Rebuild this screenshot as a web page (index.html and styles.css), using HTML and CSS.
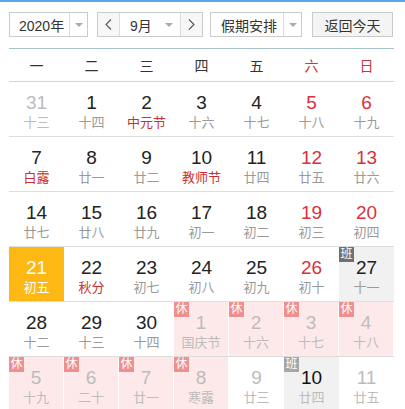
FILE: index.html
```html
<!DOCTYPE html>
<html lang="zh-CN">
<head>
  <meta charset="UTF-8">
  <title>万年历</title>
  <link rel="stylesheet" href="styles.css">
</head>
<body>
  <div class="calendar">
    <div class="toolbar">
      <div class="picker year-picker">
        <span class="picker-text">2020年</span>
        <span class="picker-drop"><i class="caret"></i></span>
      </div>
      <div class="picker month-picker">
        <span class="nav-btn">
          <svg width="7" height="11" viewBox="0 0 7 11"><polyline points="6,0.5 1,5.5 6,10.5" fill="none" stroke="#555" stroke-width="1.1"/></svg>
        </span>
        <span class="picker-text month-text">9月</span>
        <span class="picker-drop month-drop"><i class="caret"></i></span>
        <span class="nav-btn">
          <svg width="7" height="11" viewBox="0 0 7 11"><polyline points="1,0.5 6,5.5 1,10.5" fill="none" stroke="#555" stroke-width="1.1"/></svg>
        </span>
      </div>
      <div class="picker holiday-picker">
        <span class="picker-text">假期安排</span>
        <span class="picker-drop"><i class="caret"></i></span>
      </div>
      <button class="today-btn">返回今天</button>
    </div>

    <div class="week-head">
      <span>一</span><span>二</span><span>三</span><span>四</span><span>五</span>
      <span class="red">六</span><span class="red">日</span>
    </div>

    <div class="week">
      <div class="day other"><b>31</b><em>十三</em></div>
      <div class="day"><b>1</b><em>十四</em></div>
      <div class="day"><b>2</b><em class="fest">中元节</em></div>
      <div class="day"><b>3</b><em>十六</em></div>
      <div class="day"><b>4</b><em>十七</em></div>
      <div class="day weekend"><b>5</b><em>十八</em></div>
      <div class="day weekend"><b>6</b><em>十九</em></div>
    </div>
    <div class="week">
      <div class="day"><b>7</b><em class="fest">白露</em></div>
      <div class="day"><b>8</b><em>廿一</em></div>
      <div class="day"><b>9</b><em>廿二</em></div>
      <div class="day"><b>10</b><em class="fest">教师节</em></div>
      <div class="day"><b>11</b><em>廿四</em></div>
      <div class="day weekend"><b>12</b><em>廿五</em></div>
      <div class="day weekend"><b>13</b><em>廿六</em></div>
    </div>
    <div class="week">
      <div class="day"><b>14</b><em>廿七</em></div>
      <div class="day"><b>15</b><em>廿八</em></div>
      <div class="day"><b>16</b><em>廿九</em></div>
      <div class="day"><b>17</b><em>初一</em></div>
      <div class="day"><b>18</b><em>初二</em></div>
      <div class="day weekend"><b>19</b><em>初三</em></div>
      <div class="day weekend"><b>20</b><em>初四</em></div>
    </div>
    <div class="week">
      <div class="day today"><b>21</b><em>初五</em></div>
      <div class="day"><b>22</b><em class="fest">秋分</em></div>
      <div class="day"><b>23</b><em>初七</em></div>
      <div class="day"><b>24</b><em>初八</em></div>
      <div class="day"><b>25</b><em>初九</em></div>
      <div class="day weekend"><b>26</b><em>初十</em></div>
      <div class="day work"><span class="tag">班</span><b>27</b><em>十一</em></div>
    </div>
    <div class="week">
      <div class="day"><b>28</b><em>十二</em></div>
      <div class="day"><b>29</b><em>十三</em></div>
      <div class="day"><b>30</b><em>十四</em></div>
      <div class="day other rest"><span class="tag">休</span><b>1</b><em>国庆节</em></div>
      <div class="day other rest"><span class="tag">休</span><b>2</b><em>十六</em></div>
      <div class="day other rest"><span class="tag">休</span><b>3</b><em>十七</em></div>
      <div class="day other rest"><span class="tag">休</span><b>4</b><em>十八</em></div>
    </div>
    <div class="week">
      <div class="day other rest"><span class="tag">休</span><b>5</b><em>十九</em></div>
      <div class="day other rest"><span class="tag">休</span><b>6</b><em>二十</em></div>
      <div class="day other rest"><span class="tag">休</span><b>7</b><em>廿一</em></div>
      <div class="day other rest"><span class="tag">休</span><b>8</b><em>寒露</em></div>
      <div class="day other"><b>9</b><em>廿三</em></div>
      <div class="day other work next-work"><span class="tag">班</span><b>10</b><em>廿四</em></div>
      <div class="day other"><b>11</b><em>廿五</em></div>
    </div>
  </div>
</body>
</html>
```

FILE: styles.css
```css
body {
  margin: 0;
  background: #fff;
  font-family: "Liberation Sans", "Noto Sans CJK SC", sans-serif;
  color: #222;
  overflow: hidden;
}
.calendar {
  border-top: 2px solid #58a6ea;
  padding: 10px 11px 0 9px;
  width: 385px;
}
.toolbar {
  display: flex;
  height: 25px;
}
.picker {
  display: flex;
  align-items: stretch;
  border: 1px solid #cbcbcb;
  box-sizing: border-box;
  height: 25px;
  font-size: 14px;
  color: #333;
}
.picker-text {
  display: flex;
  align-items: center;
  padding-left: 9px;
  flex: 1;
}
.picker-drop {
  width: 17px;
  border-left: 1px solid #ddd;
  display: flex;
  align-items: center;
  justify-content: center;
}
.caret {
  width: 0;
  height: 0;
  border-left: 4px solid transparent;
  border-right: 4px solid transparent;
  border-top: 4px solid #aaa;
}
.year-picker {
  width: 79px;
}
.month-picker {
  width: 106px;
  margin-left: 9px;
}
.nav-btn {
  width: 21px;
  display: flex;
  align-items: center;
  justify-content: center;
  background: #f7f7f7;
}
.nav-btn:first-child {
  border-right: 1px solid #ddd;
}
.nav-btn:last-child {
  border-left: 1px solid #ddd;
}
.month-text {
  padding-left: 10px;
}
.month-drop {
  border-left: none;
  width: 22px;
}
.holiday-picker {
  width: 92px;
  margin-left: 7px;
}
.holiday-picker .picker-text {
  padding-left: 10px;
}
.today-btn {
  margin-left: 10px;
  width: 81px;
  height: 25px;
  border: 1px solid #cbcbcb;
  background: #f4f4f4;
  font-family: inherit;
  font-size: 14px;
  color: #333;
  padding: 0;
}
.week-head {
  display: grid;
  grid-template-columns: repeat(7, 55px);
  margin-top: 11px;
  height: 34px;
  border-top: 1px solid #a9c2ca;
  border-bottom: 1px solid #d5d5d5;
  box-sizing: border-box;
  align-items: center;
  text-align: center;
  font-size: 14px;
  color: #333;
  background: #fff;
}
.week-head .red {
  color: #c2383c;
}
.week {
  display: grid;
  grid-template-columns: repeat(7, 55px);
  height: 55px;
  border-bottom: 1px solid #dedede;
  box-sizing: border-box;
}
.day {
  position: relative;
  display: flex;
  flex-direction: column;
  align-items: center;
  padding-top: 9px;
  box-sizing: border-box;
}
.day b {
  font-weight: normal;
  font-size: 19px;
  line-height: 23px;
  color: #222;
}
.day em {
  font-style: normal;
  font-size: 13px;
  line-height: 17px;
  color: #9a9a9a;
}
.day em.fest {
  color: #c9302c;
}
.day.weekend b {
  color: #d9323c;
}
.day.other b,
.day.other em {
  color: #bcbcbc;
}
.day.today {
  background: #fdb813;
}
.day.today b,
.day.today em {
  color: #fff;
}
.day.rest {
  background: #fde9e9;
  border-right: 1px solid #fff;
}
.day.work {
  background: #f1f1f1;
}
.day.next-work b {
  color: #111;
}
.tag {
  position: absolute;
  top: 0;
  left: 0;
  width: 15px;
  height: 15px;
  font-size: 12px;
  line-height: 15px;
  text-align: center;
  color: #fff;
  background: #ef9090;
}
.work .tag {
  background: #707070;
}
.next-work .tag {
  background: #a6a6a6;
}
```
